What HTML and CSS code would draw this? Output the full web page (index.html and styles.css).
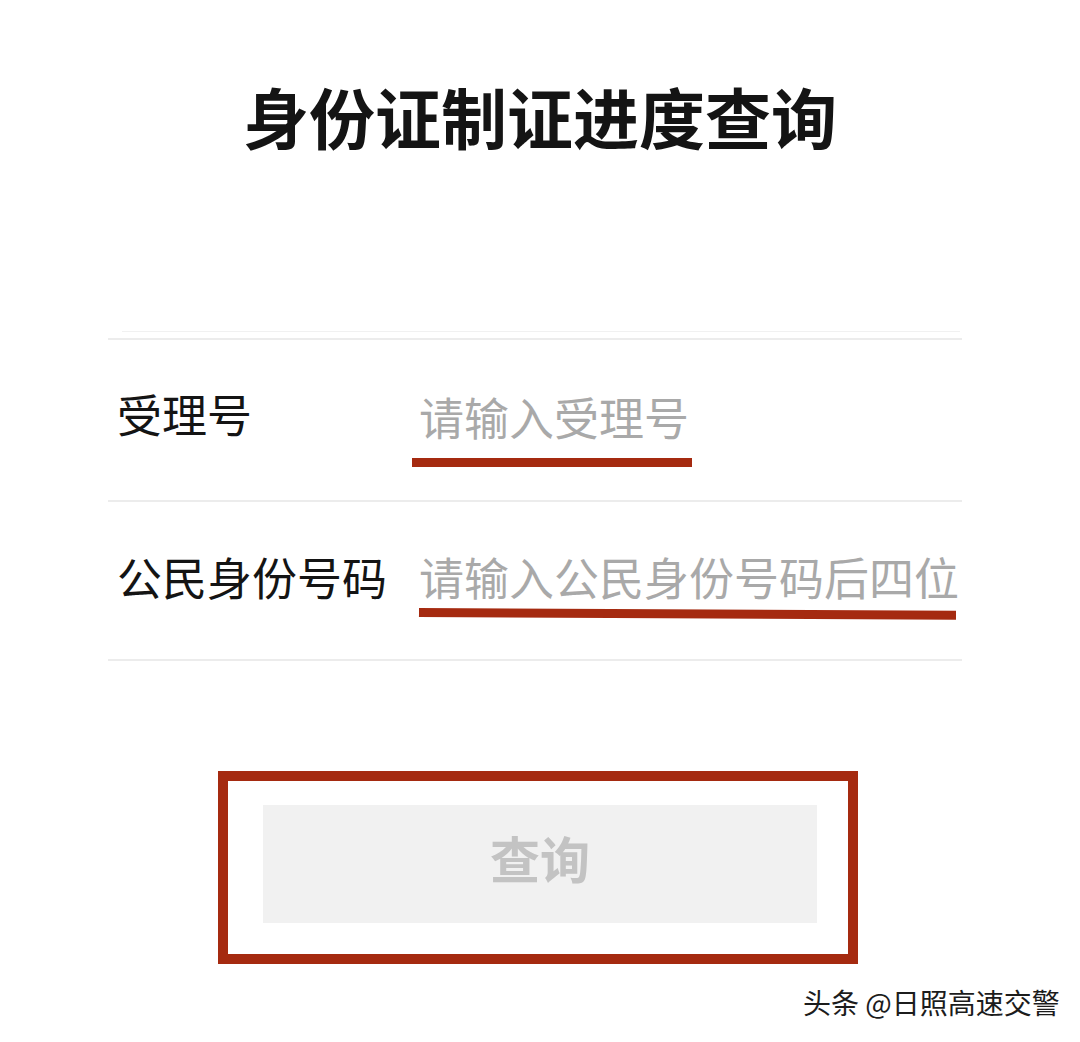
FILE: index.html
```html
<!DOCTYPE html>
<html lang="zh-CN">
<head>
<meta charset="utf-8">
<title>身份证制证进度查询</title>
<link rel="stylesheet" href="styles.css">
</head>
<body>
<div class="page">
  <h1 class="title">身份证制证进度查询</h1>
  <div class="ghost-line"></div>
  <div class="form">
    <div class="row row-1">
      <div class="label">受理号</div>
      <div class="value">
        <div class="placeholder">请输入受理号</div>
        <div class="mark mark-1"></div>
      </div>
    </div>
    <div class="row row-2">
      <div class="label">公民身份号码</div>
      <div class="value">
        <div class="placeholder">请输入公民身份号码后四位</div>
        <div class="mark mark-2"></div>
      </div>
    </div>
  </div>
  <div class="btn-frame">
    <div class="btn">查询</div>
  </div>
  <div class="watermark">头条 @日照高速交警</div>
</div>
</body>
</html>
```

FILE: styles.css
```css
html, body {
  margin: 0;
  padding: 0;
  background: #ffffff;
}

.page {
  position: relative;
  width: 1080px;
  height: 1042px;
  overflow: hidden;
  padding-top: 75px;
  box-sizing: border-box;
  font-family: "Noto Sans CJK SC", "Noto Sans", sans-serif;
  color: #151515;
}

.title {
  margin: 0;
  font-size: 66px;
  line-height: 80px;
  font-weight: 700;
  text-align: center;
  color: #141414;
}

.ghost-line {
  height: 1px;
  background: #f1f1f1;
  margin: 176px 120px 0 122px;
}

.form {
  margin: 6px 118px 0 108px;
  border-top: 2px solid #ececec;
}

.row {
  display: flex;
  align-items: flex-start;
  border-bottom: 2px solid #ececec;
}

.label {
  width: 302px;
  padding-left: 9px;
  font-size: 45px;
  line-height: 60px;
  color: #141414;
  white-space: nowrap;
}

.value {
  display: flex;
  flex-direction: column;
  align-items: flex-start;
}

.placeholder {
  font-size: 45px;
  line-height: 60px;
  color: #a9a9a9;
  white-space: nowrap;
}

.row-1 {
  padding: 44px 0 33px;
}

.row-1 .value {
  padding-top: 3px;
}

.row-2 {
  padding: 45px 0 42px;
}

.mark {
  height: 9px;
  background: #a52a10;
}

.mark-1 {
  width: 280px;
  margin: 11px 0 0 -7px;
}

.mark-2 {
  width: 537px;
  margin: 1px 0 0 0;
  transform: rotate(0.3deg);
  transform-origin: left center;
}

.btn-frame {
  width: 640px;
  height: 193px;
  margin: 110px 0 0 218px;
  border: 10px solid #a52a10;
  padding: 24px 31px 0 35px;
  box-sizing: border-box;
}

.btn {
  height: 118px;
  padding-bottom: 14px;
  box-sizing: border-box;
  background: #f1f1f1;
  display: flex;
  align-items: center;
  justify-content: center;
  font-size: 50px;
  font-weight: 700;
  color: #c3c3c3;
}

.watermark {
  position: absolute;
  left: 803px;
  top: 983px;
  font-size: 28px;
  line-height: 38px;
  color: #1c1c1c;
  white-space: nowrap;
}
```
